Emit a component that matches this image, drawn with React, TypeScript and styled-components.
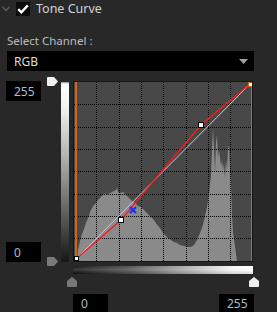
import React from 'react';
import styled, { createGlobalStyle } from 'styled-components';

const GlobalStyle = createGlobalStyle`
  html, body {
    margin: 0;
    padding: 0;
    background: #282828;
  }
  * {
    box-sizing: border-box;
  }
`;

const colors = {
  panel: '#282828',
  field: '#000000',
  graph: '#484848',
  hist: '#8a8a8a',
  label: '#bcbcbc',
  title: '#d2d2d2',
  value: '#a9bdd2',
  orange: '#ff6a00',
};

// histogram outline, in page coordinates (graph starts at 73, 81)
const histTop: [number, number][] = [
  [77, 261], [78, 250], [80, 241], [82, 234], [84, 229], [85, 226], [86, 223],
  [88, 218], [89, 216], [90, 212], [92, 208], [94, 205], [96, 203], [97, 201],
  [99, 199], [101, 197], [103, 195], [105, 193], [107, 195], [108, 194],
  [110, 193], [112, 192], [114, 191], [116, 190], [117, 188], [118, 192],
  [120, 193], [123, 192], [126, 195], [129, 198], [132, 201], [135, 203],
  [138, 206], [141, 207], [144, 210], [147, 213], [150, 216], [153, 219],
  [156, 223], [159, 227], [162, 231], [165, 235], [168, 238], [171, 240],
  [174, 242], [177, 243], [180, 245], [184, 246], [188, 247], [191, 247],
  [194, 245], [197, 240], [200, 233], [203, 225], [205, 216], [207, 207],
  [209, 195], [210, 184], [211, 176], [212, 150], [213, 128], [214, 148],
  [215, 172], [216, 142], [217, 135], [218, 158], [219, 150], [220, 158],
  [221, 166], [222, 160], [223, 170], [224, 163], [225, 178], [226, 160],
  [227, 170], [228, 148], [229, 146], [230, 168], [231, 184], [232, 214],
  [233, 232], [235, 246], [237, 261],
];

const histPoints = histTop.map(([x, y]) => `${x - 73},${y - 81}`).join(' ');
const gridSteps = [1, 2, 3, 4, 5, 6, 7].map((k) => 1 + k * 22.3);

const curvePoints = [
  [75, 260], [98, 240], [121, 220], [161, 172], [201, 125], [226, 104], [251, 83],
]
  .map(([x, y]) => `${x - 73},${y - 81}`)
  .join(' ');

const Chevron = () => (
  <svg width="8" height="6" viewBox="0 0 8 6">
    <path d="M0.5 0.8 L4 4.6 L7.5 0.8" fill="none" stroke="#5a5a5a" strokeWidth="1.5" />
  </svg>
);

const Check = () => (
  <svg width="12" height="10" viewBox="0 0 12 10">
    <path d="M1.2 5.2 L4.4 8.3 L10.8 1.4" fill="none" stroke="#ffffff" strokeWidth="2.3" />
  </svg>
);

const DropArrow = () => (
  <svg width="9" height="5" viewBox="0 0 9 5">
    <path d="M0 0 H9 L4.5 5 Z" fill="#a0a0a0" />
  </svg>
);

const RightHandle = ({ color }: { color: string }) => (
  <svg width="11" height="9" viewBox="0 0 11 9">
    <path d="M1 0 H7 L11 4.5 L7 9 H1 Q0 9 0 8 V1 Q0 0 1 0 Z" fill={color} />
  </svg>
);

const UpHandle = ({ color }: { color: string }) => (
  <svg width="10" height="10" viewBox="0 0 10 10">
    <path d="M5 0 L10 4 V9 Q10 10 9 10 H1 Q0 10 0 9 V4 Z" fill={color} />
  </svg>
);

const CurvePlot = () => (
  <svg width="178" height="179" viewBox="1 1 178 179">
    <rect x="0" y="0" width="180" height="181" fill={colors.graph} />
    <polygon points={histPoints} fill={colors.hist} />
    {gridSteps.map((p) => (
      <line
        key={`v${p}`}
        x1={Math.round(p) + 0.5}
        y1="1"
        x2={Math.round(p) + 0.5}
        y2="180"
        stroke="#000"
        strokeDasharray="1 1"
      />
    ))}
    {gridSteps.map((p) => (
      <line
        key={`h${p}`}
        x1="1"
        y1={Math.round(p) + 0.5}
        x2="179"
        y2={Math.round(p) + 0.5}
        stroke="#000"
        strokeDasharray="1 1"
      />
    ))}
    <line x1="3" y1="1" x2="3" y2="180" stroke={colors.orange} strokeWidth="1.6" />
    <line x1="178.5" y1="1" x2="178.5" y2="180" stroke="#d0641c" strokeWidth="1" />
    <line x1="2" y1="179" x2="178" y2="2" stroke="#c8c8dc" strokeWidth="1" />
    <polyline points={curvePoints} fill="none" stroke="#ff1a1a" strokeWidth="1.3" />
    <rect x="45.5" y="136.5" width="5" height="5" fill="#fff" stroke="#000" />
    <rect x="125.5" y="41.5" width="5" height="5" fill="#fff" stroke="#000" />
    <rect x="175.5" y="1.5" width="4" height="4" fill="#fff" stroke="#d0641c" />
    <rect x="1.5" y="175.5" width="4" height="4" fill="#fff" stroke="#000" />
    <path d="M57 126 L63 132 M63 126 L57 132" stroke="#1e2cff" strokeWidth="2.2" />
  </svg>
);

export default function App() {
  return (
    <>
      <GlobalStyle />
      <Panel>
        <Header>
          <Chevron />
          <CheckBox>
            <Check />
          </CheckBox>
          <Title>Tone Curve</Title>
        </Header>
        <Label>Select Channel :</Label>
        <Select>
          <span>RGB</span>
          <DropArrow />
        </Select>
        <CurveRow>
          <InputColumn>
            <ValueBox>255</ValueBox>
            <ValueBox>0</ValueBox>
          </InputColumn>
          <VSlider>
            <Handle $top={-4}>
              <RightHandle color="#f2f2f2" />
            </Handle>
            <Handle $top={176}>
              <RightHandle color="#7a7a7a" />
            </Handle>
          </VSlider>
          <VBar />
          <Graph>
            <CurvePlot />
          </Graph>
        </CurveRow>
        <BottomArea>
          <HBar />
          <HSlider>
            <Handle $top={3} $left={-6}>
              <UpHandle color="#787878" />
            </Handle>
            <Handle $top={3} $left={176}>
              <UpHandle color="#f0f0f0" />
            </Handle>
          </HSlider>
          <BottomInputs>
            <ValueBox $h={18}>0</ValueBox>
            <ValueBox $h={18}>255</ValueBox>
          </BottomInputs>
        </BottomArea>
      </Panel>
    </>
  );
}

const Panel = styled.div`
  width: 277px;
  height: 312px;
  overflow: hidden;
  background: ${colors.panel};
  display: flex;
  flex-direction: column;
  font-family: 'Noto Sans', 'Open Sans', sans-serif;
`;

const Header = styled.div`
  display: flex;
  align-items: center;
  height: 14px;
  margin-top: 2px;
  padding-left: 2px;
  gap: 6px;
`;

const CheckBox = styled.div`
  width: 14px;
  height: 14px;
  background: #0c0c0c;
  display: flex;
  align-items: center;
  justify-content: center;
`;

const Title = styled.span`
  color: ${colors.title};
  font-size: 12.5px;
  line-height: 14px;
`;

const Label = styled.div`
  margin-top: 17px;
  margin-left: 7px;
  color: ${colors.label};
  font-size: 11.5px;
  line-height: 16px;
`;

const Select = styled.div`
  margin-top: 2px;
  margin-left: 7px;
  width: 247px;
  height: 20px;
  background: ${colors.field};
  display: flex;
  align-items: center;
  justify-content: space-between;
  padding: 0 6px 0 7px;
  color: #dcdcdc;
  font-size: 12px;
`;

const CurveRow = styled.div`
  display: flex;
  height: 181px;
  margin-top: 10px;
  padding-left: 6px;
`;

const InputColumn = styled.div`
  width: 35px;
  display: flex;
  flex-direction: column;
  justify-content: space-between;
`;

const ValueBox = styled.div<{ $h?: number }>`
  width: 35px;
  height: ${(p) => p.$h ?? 20}px;
  background: ${colors.field};
  color: ${colors.value};
  font-size: 12px;
  display: flex;
  align-items: center;
  padding-left: 8px;
`;

const VSlider = styled.div`
  position: relative;
  width: 11px;
  margin-left: 6px;
`;

const Handle = styled.div<{ $top: number; $left?: number }>`
  position: absolute;
  top: ${(p) => p.$top}px;
  left: ${(p) => p.$left ?? 0}px;
  display: flex;
`;

const VBar = styled.div`
  width: 8px;
  height: 180px;
  margin-top: 1px;
  margin-left: 3px;
  background: linear-gradient(
    to bottom,
    #8a8a8a 0px,
    #ffffff 2px,
    #f2f2f2 14%,
    #a8a8a8 45%,
    #5a5a5a 75%,
    #161616 100%
  );
`;

const Graph = styled.div`
  width: 180px;
  height: 181px;
  margin-left: 4px;
  border: 1px solid #161616;
  display: flex;
`;

const BottomArea = styled.div`
  margin-left: 73px;
  width: 181px;
  display: flex;
  flex-direction: column;
`;

const HBar = styled.div`
  margin-top: 4px;
  width: 180px;
  height: 8px;
  background: linear-gradient(
      to bottom,
      rgba(255, 255, 255, 0.05),
      rgba(255, 255, 255, 0.18) 45%,
      rgba(0, 0, 0, 0.15)
    ),
    linear-gradient(to right, #0e0e0e 0%, #4a4a4a 30%, #a8a8a8 62%, #f4f4f4 88%, #ffffff 100%);
`;

const HSlider = styled.div`
  position: relative;
  height: 20px;
`;

const BottomInputs = styled.div`
  display: flex;
  justify-content: space-between;
`;
